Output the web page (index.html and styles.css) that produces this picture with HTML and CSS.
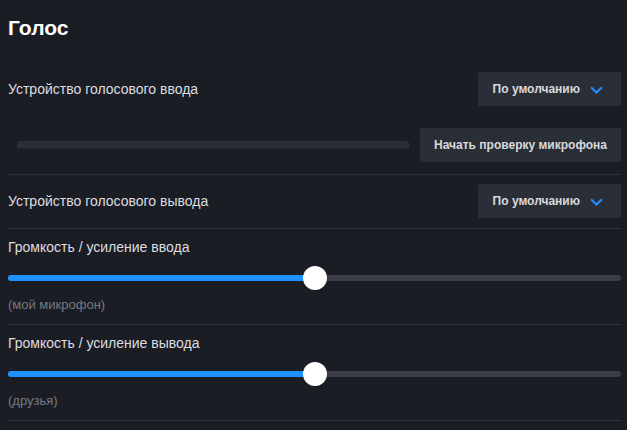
FILE: index.html
```html
<!DOCTYPE html>
<html lang="ru">
<head>
<meta charset="utf-8">
<title>Голос</title>
<link rel="stylesheet" href="styles.css">
</head>
<body>
<div class="page">
  <h1 class="title">Голос</h1>

  <div class="row row-input">
    <span class="label">Устройство голосового ввода</span>
    <button class="select">По умолчанию
      <svg class="chev" width="13" height="8" viewBox="0 0 13 8"><path d="M1 1.2 L6.5 6.5 L12 1.2" fill="none" stroke="#1e90ff" stroke-width="2"/></svg>
    </button>
  </div>

  <div class="row row-test">
    <div class="level"></div>
    <button class="btn">Начать проверку микрофона</button>
  </div>

  <div class="divider"></div>

  <div class="row row-output">
    <span class="label">Устройство голосового вывода</span>
    <button class="select">По умолчанию
      <svg class="chev" width="13" height="8" viewBox="0 0 13 8"><path d="M1 1.2 L6.5 6.5 L12 1.2" fill="none" stroke="#1e90ff" stroke-width="2"/></svg>
    </button>
  </div>

  <div class="divider"></div>

  <div class="section">
    <div class="label">Громкость / усиление ввода</div>
    <div class="slider">
      <div class="track"><div class="fill" style="width: 50%"></div></div>
      <div class="thumb" style="left: 50%"></div>
    </div>
    <div class="caption">(мой микрофон)</div>
  </div>

  <div class="divider"></div>

  <div class="section">
    <div class="label">Громкость / усиление вывода</div>
    <div class="slider">
      <div class="track"><div class="fill" style="width: 50%"></div></div>
      <div class="thumb" style="left: 50%"></div>
    </div>
    <div class="caption">(друзья)</div>
  </div>

  <div class="divider"></div>
</div>
</body>
</html>
```

FILE: styles.css
```css
html, body {
  margin: 0;
  padding: 0;
  background: #1a1d23;
}
body {
  font-family: "Liberation Sans", Arial, sans-serif;
  color: #dcdde0;
  height: 430px;
  overflow: hidden;
}
.page {
  padding: 16px 6px 0 8px;
}
.title {
  margin: 0;
  font-size: 21px;
  line-height: 24px;
  font-weight: bold;
  color: #ffffff;
}
.row {
  display: flex;
  align-items: center;
  justify-content: space-between;
  height: 34px;
}
.row-input {
  margin-top: 32px;
}
.row-test {
  margin-top: 22px;
  margin-bottom: 12px;
}
.row-output {
  margin-top: 9px;
  margin-bottom: 10px;
}
.label {
  font-size: 14px;
  line-height: 16px;
  color: #dcdde0;
}
.select {
  display: flex;
  align-items: center;
  gap: 10px;
  height: 34px;
  padding: 0 18px 0 15px;
  border: none;
  border-radius: 2px;
  background: #2a2e36;
  color: #d8dade;
  font-family: inherit;
  font-size: 12px;
  font-weight: bold;
  white-space: nowrap;
}
.chev {
  display: block;
  flex: none;
  margin-top: 1px;
}
.level {
  flex: 1;
  height: 8px;
  margin: 0 11px 0 9px;
  background: #2a2e35;
  border-radius: 2px;
  box-shadow: inset 0 -1px 0 #22262c;
}
.btn {
  height: 34px;
  padding: 0 14px;
  border: none;
  border-radius: 2px;
  background: #2a2e36;
  color: #d8dade;
  font-family: inherit;
  font-size: 12px;
  font-weight: bold;
  white-space: nowrap;
}
.divider {
  height: 1px;
  background: #2d3139;
}
.section {
  padding: 10px 0 11px;
}
.slider {
  position: relative;
  height: 24px;
  margin-top: 11px;
  display: flex;
  align-items: center;
}
.track {
  width: 100%;
  height: 6px;
  border-radius: 3px;
  background: #3b3e45;
  overflow: hidden;
}
.fill {
  height: 100%;
  background: #1e90ff;
}
.thumb {
  position: absolute;
  top: 0;
  width: 24px;
  height: 24px;
  margin-left: -12px;
  border-radius: 50%;
  background: #ffffff;
}
.caption {
  margin-top: 7px;
  font-size: 13px;
  line-height: 16px;
  color: #767a82;
}
```
